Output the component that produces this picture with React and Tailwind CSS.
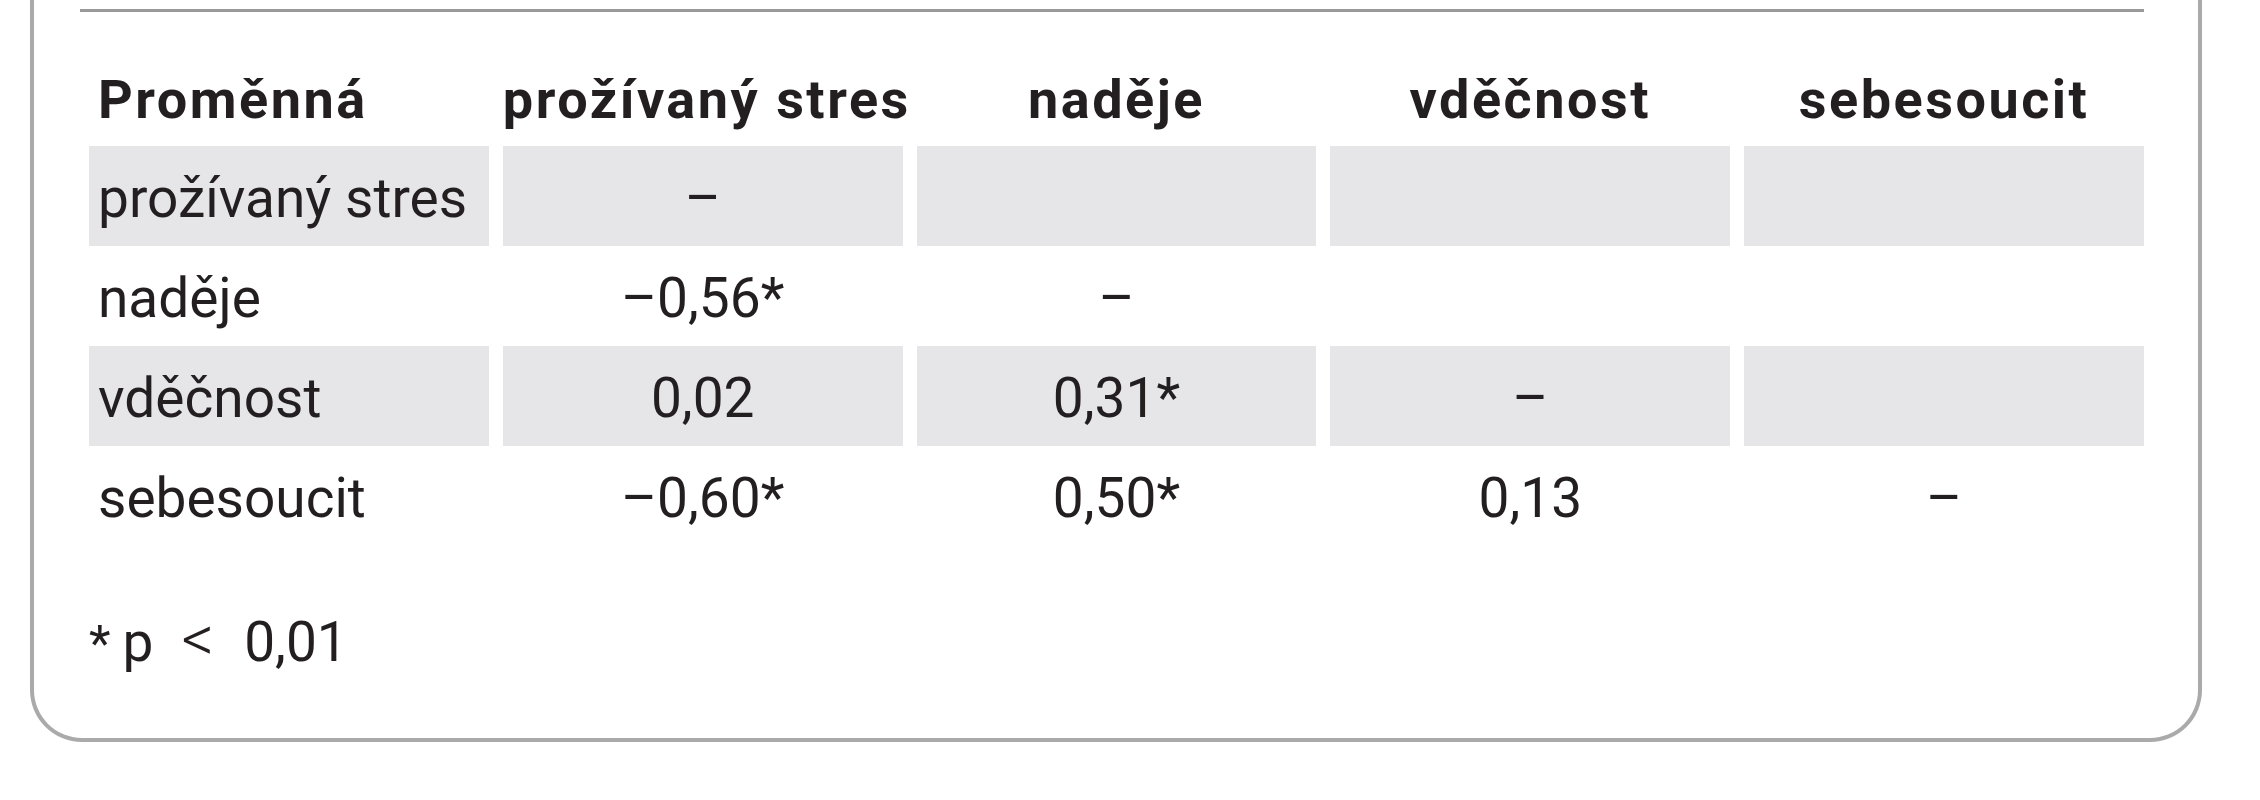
import React from 'react';

const headers = ['Proměnná', 'prožívaný stres', 'naděje', 'vděčnost', 'sebesoucit'];

const rows = [
  ['prožívaný stres', '–', '', '', ''],
  ['naděje', '–0,56*', '–', '', ''],
  ['vděčnost', '0,02', '0,31*', '–', ''],
  ['sebesoucit', '–0,60*', '0,50*', '0,13', '–'],
];

export default function App() {
  return (
    <div className="w-[2260px] h-[800px] bg-white text-[#231f20] text-[55px]" style={{ fontFamily: 'Roboto, "Noto Sans", sans-serif' }}>
      <div className="ml-[30px] w-[2172px] h-[742px] border-x-4 border-b-4 border-[#aaaaaa] rounded-b-[52px] pl-[46px] pr-[54px]">
        <div className="pt-[9px]">
          <div className="h-[3px] bg-[#999999]" />
        </div>

        <div className="pl-[9px]">
          {/* header */}
          <div className="grid grid-cols-5 gap-x-[14px] h-[134px]">
            {headers.map((h, i) => (
              <div
                key={h}
                className={`pt-[57px] leading-[61px] text-[54px] tracking-[2.5px] font-bold whitespace-nowrap ${i === 0 ? 'pl-[9px] text-left' : 'text-center'}`}
              >
                {h}
              </div>
            ))}
          </div>

          {/* body rows */}
          {rows.map((row, r) => (
            <div key={r} className="grid grid-cols-5 gap-x-[14px] h-[100px]">
              {row.map((cell, c) => (
                <div
                  key={c}
                  className={`h-[100px] pt-[5px] leading-[95px] whitespace-nowrap ${r % 2 === 0 ? 'bg-[#e6e6e8]' : ''} ${c === 0 ? 'pl-[9px] text-left' : 'text-center'}`}
                >
                  {cell}
                </div>
              ))}
            </div>
          ))}
        </div>

        {/* footnote */}
        <div className="mt-[66px] pl-[9px] leading-[61px] whitespace-nowrap">
          <span className="text-[50px]">*</span>
          <span className="ml-[12px]">p</span>
          <span className="ml-[28px] text-[64px] leading-[0px] font-light">&lt;</span>
          <span className="ml-[30px]">0,01</span>
        </div>
      </div>
    </div>
  );
}
